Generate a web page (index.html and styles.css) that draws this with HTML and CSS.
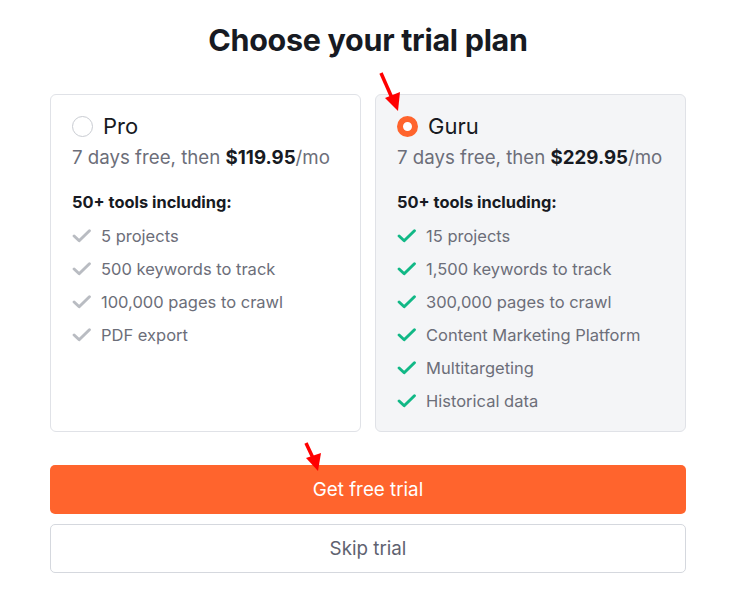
FILE: index.html
```html
<!DOCTYPE html>
<html>
<head>
<meta charset="utf-8">
<link rel="stylesheet" href="styles.css">
</head>
<body>
<div class="page">
  <h1 class="title">Choose your trial plan</h1>
  <div class="plans">
    <div class="card">
      <div class="head"><span class="radio"></span><span class="name">Pro</span></div>
      <div class="price">7 days free, then <b>$119.95</b>/mo</div>
      <div class="tools">50+ tools including:</div>
      <ul class="list gray">
        <li><svg class="chk" viewBox="0 0 18 14"><path d="M2 7.5 L6.8 12 L16.5 2.5"/></svg>5 projects</li>
        <li><svg class="chk" viewBox="0 0 18 14"><path d="M2 7.5 L6.8 12 L16.5 2.5"/></svg>500 keywords to track</li>
        <li><svg class="chk" viewBox="0 0 18 14"><path d="M2 7.5 L6.8 12 L16.5 2.5"/></svg>100,000 pages to crawl</li>
        <li><svg class="chk" viewBox="0 0 18 14"><path d="M2 7.5 L6.8 12 L16.5 2.5"/></svg>PDF export</li>
      </ul>
    </div>
    <div class="card selected">
      <div class="head"><span class="radio on"></span><span class="name">Guru</span></div>
      <div class="price">7 days free, then <b>$229.95</b>/mo</div>
      <div class="tools">50+ tools including:</div>
      <ul class="list green">
        <li><svg class="chk" viewBox="0 0 18 14"><path d="M2 7.5 L6.8 12 L16.5 2.5"/></svg>15 projects</li>
        <li><svg class="chk" viewBox="0 0 18 14"><path d="M2 7.5 L6.8 12 L16.5 2.5"/></svg>1,500 keywords to track</li>
        <li><svg class="chk" viewBox="0 0 18 14"><path d="M2 7.5 L6.8 12 L16.5 2.5"/></svg>300,000 pages to crawl</li>
        <li><svg class="chk" viewBox="0 0 18 14"><path d="M2 7.5 L6.8 12 L16.5 2.5"/></svg>Content Marketing Platform</li>
        <li><svg class="chk" viewBox="0 0 18 14"><path d="M2 7.5 L6.8 12 L16.5 2.5"/></svg>Multitargeting</li>
        <li><svg class="chk" viewBox="0 0 18 14"><path d="M2 7.5 L6.8 12 L16.5 2.5"/></svg>Historical data</li>
      </ul>
    </div>
  </div>
  <button class="btn primary">Get free trial</button>
  <button class="btn secondary">Skip trial</button>
</div>
<svg class="arrows" viewBox="0 0 736 600" width="736" height="600">
  <line x1="381" y1="73" x2="392" y2="98" class="arrow"/>
  <polygon points="398,111 385,98 400,92" class="head-a"/>
  <line x1="306" y1="443" x2="313" y2="458" class="arrow"/>
  <polygon points="318,471 306,458 321,453" class="head-a"/>
</svg>
</body>
</html>
```
FILE: styles.css
```css
* { box-sizing: border-box; }
html, body { margin: 0; padding: 0; background: #ffffff; }
body {
  width: 736px;
  height: 600px;
  position: relative;
  font-family: Inter, "Noto Sans", sans-serif;
  color: #191b23;
  overflow: hidden;
}
.page {
  padding: 20px 50px 0 50px;
  display: flex;
  flex-direction: column;
}
.title {
  margin: 0;
  text-align: center;
  font-size: 30.5px;
  line-height: 40px;
  font-weight: 700;
  letter-spacing: -0.3px;
  color: #171a22;
}
.plans {
  margin-top: 34px;
  display: grid;
  grid-template-columns: 1fr 1fr;
  gap: 14px;
}
.card {
  height: 338px;
  border: 1px solid #e0e2e7;
  border-radius: 6px;
  padding: 15px 21px 0 21px;
  background: #ffffff;
}
.card.selected { background: #f4f5f7; }
.head {
  display: flex;
  align-items: center;
  gap: 10px;
  height: 32px;
}
.radio {
  width: 21px;
  height: 21px;
  border-radius: 50%;
  border: 1px solid #c9ccd2;
  background: #fff;
  flex: none;
}
.radio.on {
  border: 6.5px solid #ff642d;
  background: #ffffff;
}
.name {
  font-size: 22px;
  line-height: 32px;
  color: #171a22;
}
.price {
  margin-top: 2px;
  font-size: 18.7px;
  line-height: 28px;
  color: #6c6e79;
}
.price b { color: #171a22; font-weight: 700; }
.tools {
  margin-top: 18px;
  font-size: 16.4px;
  line-height: 24px;
  font-weight: 700;
  color: #171a22;
}
.list {
  list-style: none;
  margin: 5px 0 0 0;
  padding: 0;
}
.list li {
  display: flex;
  align-items: center;
  height: 33px;
  font-size: 16.5px;
  color: #6c6e79;
}
.chk {
  width: 19px;
  height: 15px;
  margin-right: 10px;
  flex: none;
}
.chk path {
  fill: none;
  stroke-width: 2.8;
  stroke-linecap: round;
  stroke-linejoin: round;
}
.gray .chk path { stroke: #b9bcc2; }
.green .chk path { stroke: #11b886; }
.btn {
  width: 100%;
  height: 49px;
  border-radius: 5px;
  font-family: Inter, "Noto Sans", sans-serif;
  font-size: 18.8px;
  cursor: pointer;
}
.primary {
  margin-top: 33px;
  background: #ff642d;
  border: none;
  color: #ffffff;
}
.secondary {
  margin-top: 10px;
  background: #ffffff;
  border: 1px solid #d5d8de;
  color: #5f6270;
}
.arrows {
  position: absolute;
  left: 0;
  top: 0;
  pointer-events: none;
}
.arrow { stroke: #ff0000; stroke-width: 3.5; }
.head-a { fill: #ff0000; }
```
